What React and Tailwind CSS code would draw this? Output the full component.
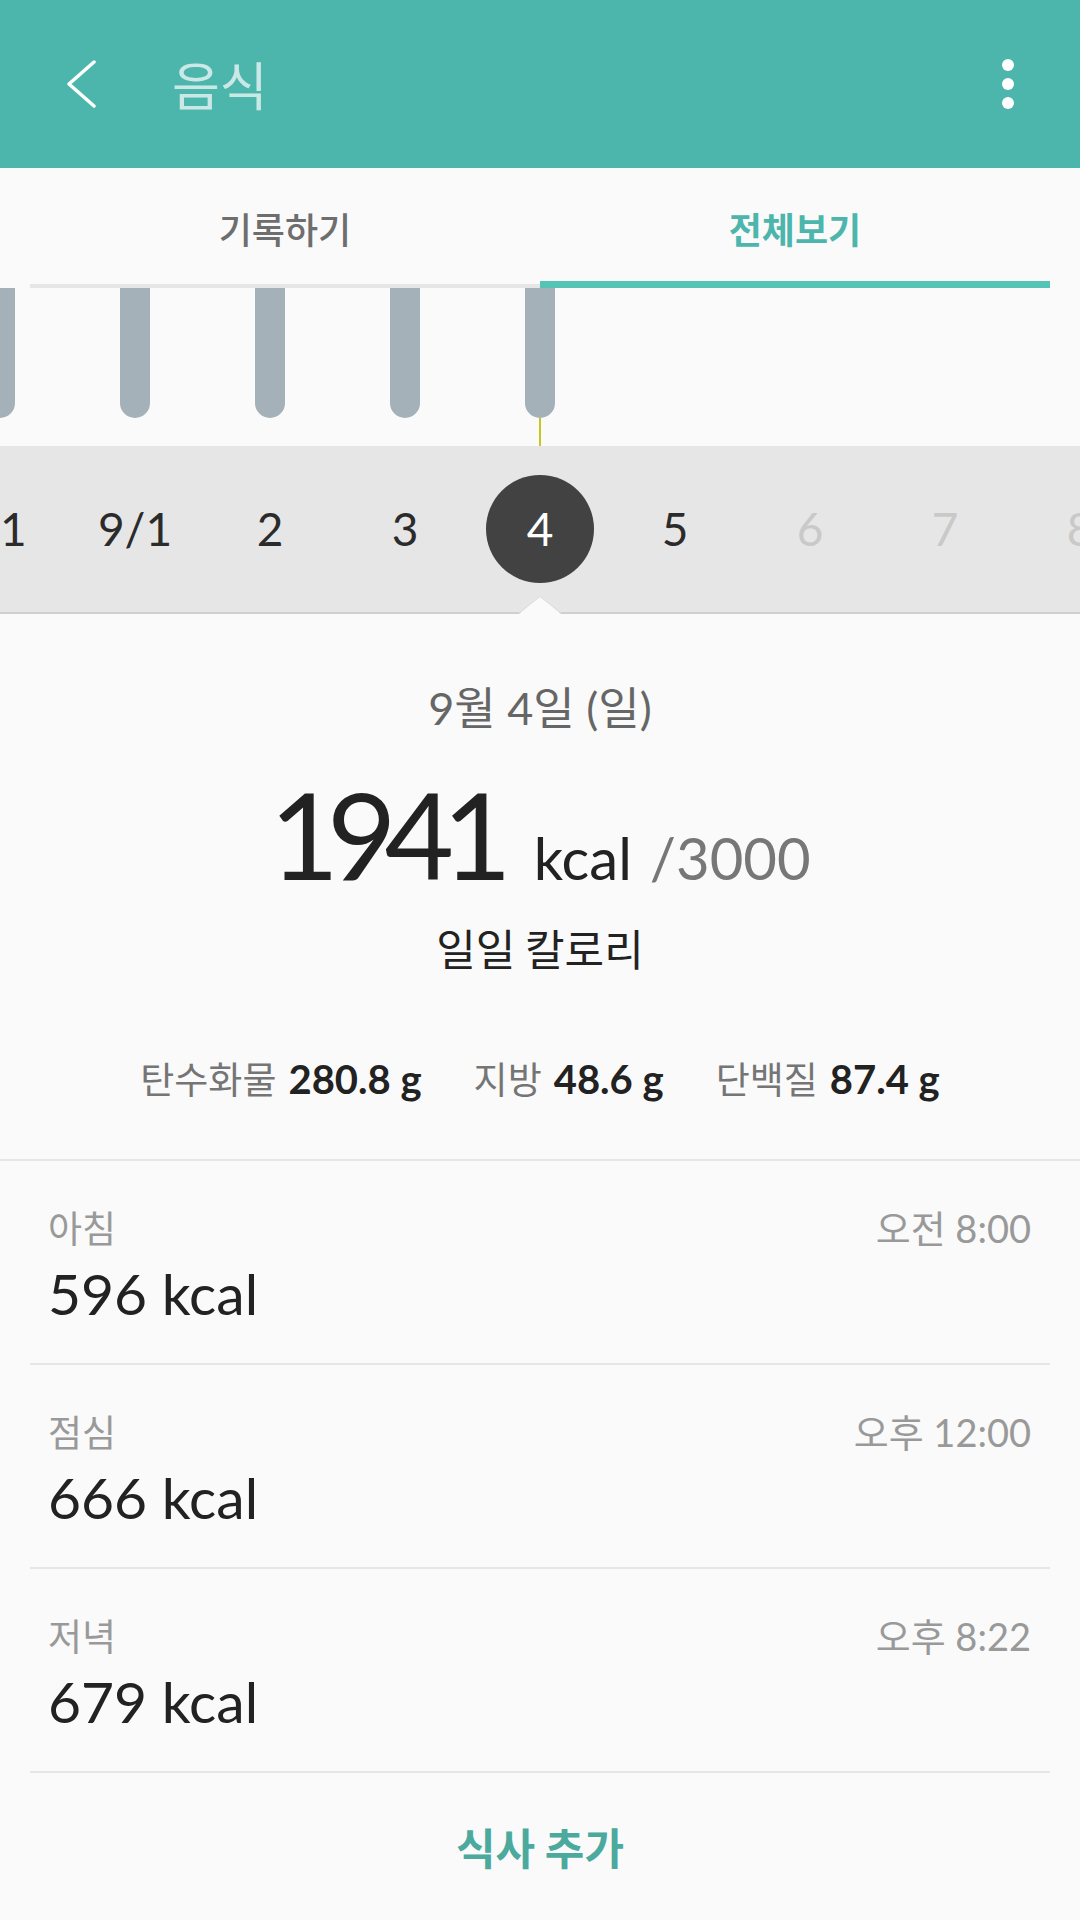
import React from "react";

const DAYS = [
  { label: "31", bar: true },
  { label: "9/1", bar: true },
  { label: "2", bar: true },
  { label: "3", bar: true },
  { label: "4", bar: true, selected: true },
  { label: "5" },
  { label: "6", future: true },
  { label: "7", future: true },
  { label: "8", future: true },
];

const MEALS = [
  { name: "아침", time: "오전 8:00", kcal: 596 },
  { name: "점심", time: "오후 12:00", kcal: 666 },
  { name: "저녁", time: "오후 8:22", kcal: 679 },
];

const MACROS = [
  { name: "탄수화물", value: "280.8 g" },
  { name: "지방", value: "48.6 g" },
  { name: "단백질", value: "87.4 g" },
];

export default function App() {
  return (
    <div className="w-[1080px] h-[1920px] bg-[#FAFAFA] flex flex-col overflow-hidden font-['Lato','Noto_Sans_CJK_KR',sans-serif]">
      {/* HEADER */}
      <header className="h-[168px] shrink-0 bg-[#4DB6AC] flex items-center pl-[66px] pr-[66px]">
        <svg width="30" height="50" viewBox="0 0 30 50" className="shrink-0">
          <path d="M28 3 L3 25 L28 47" fill="none" stroke="#fff" strokeWidth="3.5" strokeLinecap="round" strokeLinejoin="round" />
        </svg>
        <h1 className="ml-[76px] text-[52px] leading-none text-white/70 font-['Noto_Sans_CJK_KR',sans-serif]">음식</h1>
        <div className="ml-auto flex flex-col items-center gap-[7px]">
          <span className="w-[12px] h-[12px] rounded-full bg-white" />
          <span className="w-[12px] h-[12px] rounded-full bg-white" />
          <span className="w-[12px] h-[12px] rounded-full bg-white" />
        </div>
      </header>

      {/* TABS */}
      <div className="h-[120px] shrink-0 flex px-[30px]">
        <div className="flex-1 flex flex-col">
          <div className="flex-1 flex items-center justify-center pt-[6px] text-[36px] font-medium text-[#6E6E6E] font-['Noto_Sans_CJK_KR',sans-serif]">기록하기</div>
          <div className="h-[7px] flex flex-col justify-end"><div className="h-[4px] bg-[#E6E6E6]" /></div>
        </div>
        <div className="flex-1 flex flex-col">
          <div className="flex-1 flex items-center justify-center pt-[6px] text-[36px] font-bold text-[#4DB6AC] font-['Noto_Sans_CJK_KR',sans-serif]">전체보기</div>
          <div className="h-[7px] bg-[#55C4B7]" />
        </div>
      </div>

      {/* CHART BARS */}
      <div className="h-[158px] shrink-0 overflow-hidden">
        <div className="flex ml-[-67.5px] h-full">
          {DAYS.map((d) => (
            <div key={d.label} className="w-[135px] shrink-0 flex flex-col items-center">
              {d.bar && <div className="w-[30px] h-[130px] bg-[#A4B1B8] rounded-b-full" />}
              {d.selected && <div className="w-[2px] flex-1 bg-[#C6C81A]" />}
            </div>
          ))}
        </div>
      </div>

      {/* DATE STRIP */}
      <div className="relative shrink-0 border-b-2 border-[#CFCFCF] bg-[#E6E6E6]">
        <div className="h-[166px] overflow-hidden flex items-center">
          <div className="flex ml-[-67.5px]">
            {DAYS.map((d) => (
              <div key={d.label} className="w-[135px] shrink-0 flex items-center justify-center">
                {d.selected ? (
                  <div className="w-[108px] h-[108px] rounded-full bg-[#424242] text-white flex items-center justify-center text-[46px] leading-none">{d.label}</div>
                ) : (
                  <span className={`text-[46px] leading-none ${d.future ? "text-[#C9C9C9]" : "text-[#2B2B2B]"}`}>{d.label}</span>
                )}
              </div>
            ))}
          </div>
        </div>
        <svg width="42" height="18" viewBox="0 0 42 18" className="absolute left-[519px] bottom-[-2px]">
          <polygon points="0,18 21,0 42,18" fill="#FAFAFA" />
          <polyline points="0,17 21,0.5 42,17" fill="none" stroke="#DADADA" strokeWidth="1" />
        </svg>
      </div>

      {/* DAILY SUMMARY */}
      <section className="shrink-0 flex flex-col items-center pt-[70px] pb-[57px] border-b-2 border-[#E6E6E6]">
        <div className="text-[45px] leading-[48px] text-[#666]">9월 4일 (일)</div>
        <div className="mt-[42px] flex items-baseline">
          <span className="text-[120px] leading-none text-[#222] tracking-[-0.1em]">1941</span>
          <span className="ml-[34px] text-[58px] leading-none text-[#222]">kcal</span>
          <span className="ml-[18px] text-[58px] leading-none text-[#777]">/3000</span>
        </div>
        <div className="mt-[29px] text-[43px] leading-[48px] text-[#222] font-['Noto_Sans_CJK_KR',sans-serif]">일일 칼로리</div>
        <div className="mt-[84px] flex items-baseline gap-[52px]">
          {MACROS.map((m) => (
            <div key={m.name} className="flex items-baseline gap-[12px] leading-[46px]">
              <span className="text-[37px] text-[#757575] font-['Noto_Sans_CJK_KR',sans-serif]">{m.name}</span>
              <span className="text-[40px] font-bold text-[#222]">{m.value}</span>
            </div>
          ))}
        </div>
      </section>

      {/* MEALS */}
      <div className="shrink-0">
        {MEALS.map((m) => (
          <div key={m.name}>
            <div className="h-[202px] pt-[44px] pl-[48px] pr-[49px]">
              <div className="flex items-center justify-between h-[46px] text-[#999]">
                <span className="text-[37px] font-['Noto_Sans_CJK_KR',sans-serif]">{m.name}</span>
                <span className="text-[38px]">{m.time}</span>
              </div>
              <div className="mt-[11px] text-[57px] leading-[62px] text-[#222]">{m.kcal} kcal</div>
            </div>
            <div className="mx-[30px] h-[2px] bg-[#E6E6E6]" />
          </div>
        ))}
      </div>

      {/* ADD MEAL */}
      <button className="flex-1 flex items-center justify-center text-[43px] font-bold text-[#4BA99E] font-['Noto_Sans_CJK_KR',sans-serif]">식사 추가</button>
    </div>
  );
}
